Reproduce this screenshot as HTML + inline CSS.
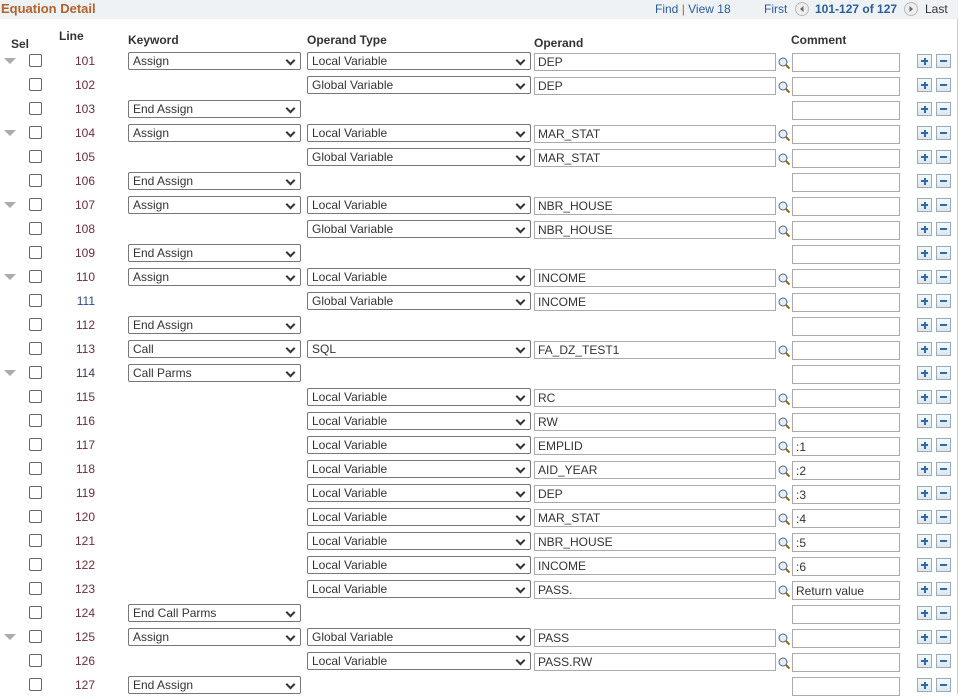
<!DOCTYPE html>
<html><head><meta charset="utf-8"><style>
*{box-sizing:border-box;margin:0;padding:0}
body{width:966px;height:694px;overflow:hidden;background:#fff;font-family:"Liberation Sans",Arial,sans-serif;font-size:12px;color:#333;position:relative}
.hdr{position:absolute;left:0;top:0;width:958px;height:19px;background:#eef2f5}
.ttl{position:absolute;left:1px;top:1px;font-size:13px;font-weight:bold;color:#b3622a}
.nav{position:absolute;top:2px;font-size:12px}
.vl{position:absolute;left:957px;top:19px;width:1px;height:675px;background:#ccc}
.th{position:absolute;font-weight:bold;color:#333;font-size:12px}
.r{position:absolute;left:0;width:958px;height:24px}
.tri{position:absolute;left:4px;top:6px;width:0;height:0;border-left:6px solid transparent;border-right:6px solid transparent;border-top:6px solid #aaa}
.cb{position:absolute;left:29px;top:2px;width:13px;height:13px;border:1px solid #666;border-radius:2px;background:#fff}
.ln{position:absolute;left:60px;width:35px;top:2px;text-align:right;color:#6b2d3c}
.sel{position:absolute;top:0;height:18px;border:1px solid #777;border-radius:2px;background:#fff;padding:1px 0 0 4px;white-space:nowrap}
.sel:after{content:"";position:absolute;right:6px;top:4px;width:5px;height:5px;border-right:2px solid #333;border-bottom:2px solid #333;transform:rotate(45deg)}
.kw{left:128px;width:173px}
.ot{left:307px;width:224px}
.op{position:absolute;left:534px;top:1px;width:242px;height:18px;border:1px solid #aaa;padding:1px 0 0 3px}
.mg{position:absolute;left:778px;top:5px;width:12px;height:12px}
.cm{position:absolute;left:792px;top:1px;width:108px;height:19px;border:1px solid #aaa;padding:2px 0 0 3px}
.pl,.mi{position:absolute;top:2px;width:15px;height:14px;border:1px solid #9ab;background:linear-gradient(#f4f8fb,#dde7ef)}
.pl{left:917px}.mi{left:936px}
.pl:before,.mi:before{content:"";position:absolute;left:3px;top:5px;width:7px;height:2px;background:#2d6aa8}
.pl:after{content:"";position:absolute;left:5.5px;top:2.5px;width:2px;height:7px;background:#2d6aa8}
</style></head><body>
<div class="hdr"><div class="ttl">Equation Detail</div>
<div class="nav" style="left:655px;color:#2a5d9a">Find <span style="color:#c55a11">|</span> View 18</div>
<div class="nav" style="left:764px;color:#2a5d9a">First</div>
<svg style="position:absolute;left:795px;top:2px" width="14" height="14"><circle cx="7" cy="7" r="6.5" fill="#eee" stroke="#bbb"/><path d="M8.5 4L5 7l3.5 3z" fill="#666"/></svg>
<div class="nav" style="left:815px;font-weight:bold;color:#2a5d9a">101-127 of 127</div>
<svg style="position:absolute;left:904px;top:2px" width="14" height="14"><circle cx="7" cy="7" r="6.5" fill="#eee" stroke="#bbb"/><path d="M5.5 4L9 7l-3.5 3z" fill="#666"/></svg>
<div class="nav" style="left:925px;color:#333">Last</div>
</div>
<div class="vl"></div>
<div class="th" style="left:11px;top:37px">Sel</div>
<div class="th" style="left:59px;top:29px">Line</div>
<div class="th" style="left:128px;top:33px">Keyword</div>
<div class="th" style="left:307px;top:33px">Operand Type</div>
<div class="th" style="left:534px;top:36px">Operand</div>
<div class="th" style="left:791px;top:33px">Comment</div>

<svg width="0" height="0" style="position:absolute"><defs><g id="m"><circle cx="5" cy="5" r="4" fill="#dfeefa" stroke="#567"/><path d="M8 8l3.5 3.5" stroke="#8a6a1a" stroke-width="2"/></g></defs></svg>

<div class="r" style="top:52px"><div class="tri"></div><div class="cb"></div><div class="ln">101</div><div class="sel kw">Assign</div><div class="sel ot">Local Variable</div><div class="op">DEP</div><svg class="mg"><use href="#m"/></svg><div class="cm"></div><div class="pl"></div><div class="mi"></div></div>
<div class="r" style="top:76px"><div class="cb"></div><div class="ln">102</div><div class="sel ot">Global Variable</div><div class="op">DEP</div><svg class="mg"><use href="#m"/></svg><div class="cm"></div><div class="pl"></div><div class="mi"></div></div>
<div class="r" style="top:100px"><div class="cb"></div><div class="ln">103</div><div class="sel kw">End Assign</div><div class="cm"></div><div class="pl"></div><div class="mi"></div></div>
<div class="r" style="top:124px"><div class="tri"></div><div class="cb"></div><div class="ln">104</div><div class="sel kw">Assign</div><div class="sel ot">Local Variable</div><div class="op">MAR_STAT</div><svg class="mg"><use href="#m"/></svg><div class="cm"></div><div class="pl"></div><div class="mi"></div></div>
<div class="r" style="top:148px"><div class="cb"></div><div class="ln">105</div><div class="sel ot">Global Variable</div><div class="op">MAR_STAT</div><svg class="mg"><use href="#m"/></svg><div class="cm"></div><div class="pl"></div><div class="mi"></div></div>
<div class="r" style="top:172px"><div class="cb"></div><div class="ln">106</div><div class="sel kw">End Assign</div><div class="cm"></div><div class="pl"></div><div class="mi"></div></div>
<div class="r" style="top:196px"><div class="tri"></div><div class="cb"></div><div class="ln">107</div><div class="sel kw">Assign</div><div class="sel ot">Local Variable</div><div class="op">NBR_HOUSE</div><svg class="mg"><use href="#m"/></svg><div class="cm"></div><div class="pl"></div><div class="mi"></div></div>
<div class="r" style="top:220px"><div class="cb"></div><div class="ln">108</div><div class="sel ot">Global Variable</div><div class="op">NBR_HOUSE</div><svg class="mg"><use href="#m"/></svg><div class="cm"></div><div class="pl"></div><div class="mi"></div></div>
<div class="r" style="top:244px"><div class="cb"></div><div class="ln">109</div><div class="sel kw">End Assign</div><div class="cm"></div><div class="pl"></div><div class="mi"></div></div>
<div class="r" style="top:268px"><div class="tri"></div><div class="cb"></div><div class="ln">110</div><div class="sel kw">Assign</div><div class="sel ot">Local Variable</div><div class="op">INCOME</div><svg class="mg"><use href="#m"/></svg><div class="cm"></div><div class="pl"></div><div class="mi"></div></div>
<div class="r" style="top:292px"><div class="cb"></div><div class="ln" style="color:#2a4a8a">111</div><div class="sel ot">Global Variable</div><div class="op">INCOME</div><svg class="mg"><use href="#m"/></svg><div class="cm"></div><div class="pl"></div><div class="mi"></div></div>
<div class="r" style="top:316px"><div class="cb"></div><div class="ln">112</div><div class="sel kw">End Assign</div><div class="cm"></div><div class="pl"></div><div class="mi"></div></div>
<div class="r" style="top:340px"><div class="cb"></div><div class="ln">113</div><div class="sel kw">Call</div><div class="sel ot">SQL</div><div class="op">FA_DZ_TEST1</div><svg class="mg"><use href="#m"/></svg><div class="cm"></div><div class="pl"></div><div class="mi"></div></div>
<div class="r" style="top:364px"><div class="tri"></div><div class="cb"></div><div class="ln" style="color:#3a3a50">114</div><div class="sel kw">Call Parms</div><div class="cm"></div><div class="pl"></div><div class="mi"></div></div>
<div class="r" style="top:388px"><div class="cb"></div><div class="ln">115</div><div class="sel ot">Local Variable</div><div class="op">RC</div><svg class="mg"><use href="#m"/></svg><div class="cm"></div><div class="pl"></div><div class="mi"></div></div>
<div class="r" style="top:412px"><div class="cb"></div><div class="ln">116</div><div class="sel ot">Local Variable</div><div class="op">RW</div><svg class="mg"><use href="#m"/></svg><div class="cm"></div><div class="pl"></div><div class="mi"></div></div>
<div class="r" style="top:436px"><div class="cb"></div><div class="ln">117</div><div class="sel ot">Local Variable</div><div class="op">EMPLID</div><svg class="mg"><use href="#m"/></svg><div class="cm">:1</div><div class="pl"></div><div class="mi"></div></div>
<div class="r" style="top:460px"><div class="cb"></div><div class="ln">118</div><div class="sel ot">Local Variable</div><div class="op">AID_YEAR</div><svg class="mg"><use href="#m"/></svg><div class="cm">:2</div><div class="pl"></div><div class="mi"></div></div>
<div class="r" style="top:484px"><div class="cb"></div><div class="ln">119</div><div class="sel ot">Local Variable</div><div class="op">DEP</div><svg class="mg"><use href="#m"/></svg><div class="cm">:3</div><div class="pl"></div><div class="mi"></div></div>
<div class="r" style="top:508px"><div class="cb"></div><div class="ln">120</div><div class="sel ot">Local Variable</div><div class="op">MAR_STAT</div><svg class="mg"><use href="#m"/></svg><div class="cm">:4</div><div class="pl"></div><div class="mi"></div></div>
<div class="r" style="top:532px"><div class="cb"></div><div class="ln">121</div><div class="sel ot">Local Variable</div><div class="op">NBR_HOUSE</div><svg class="mg"><use href="#m"/></svg><div class="cm">:5</div><div class="pl"></div><div class="mi"></div></div>
<div class="r" style="top:556px"><div class="cb"></div><div class="ln">122</div><div class="sel ot">Local Variable</div><div class="op">INCOME</div><svg class="mg"><use href="#m"/></svg><div class="cm">:6</div><div class="pl"></div><div class="mi"></div></div>
<div class="r" style="top:580px"><div class="cb"></div><div class="ln">123</div><div class="sel ot">Local Variable</div><div class="op">PASS.</div><svg class="mg"><use href="#m"/></svg><div class="cm">Return value</div><div class="pl"></div><div class="mi"></div></div>
<div class="r" style="top:604px"><div class="cb"></div><div class="ln">124</div><div class="sel kw">End Call Parms</div><div class="cm"></div><div class="pl"></div><div class="mi"></div></div>
<div class="r" style="top:628px"><div class="tri"></div><div class="cb"></div><div class="ln">125</div><div class="sel kw">Assign</div><div class="sel ot">Global Variable</div><div class="op">PASS</div><svg class="mg"><use href="#m"/></svg><div class="cm"></div><div class="pl"></div><div class="mi"></div></div>
<div class="r" style="top:652px"><div class="cb"></div><div class="ln">126</div><div class="sel ot">Local Variable</div><div class="op">PASS.RW</div><svg class="mg"><use href="#m"/></svg><div class="cm"></div><div class="pl"></div><div class="mi"></div></div>
<div class="r" style="top:676px"><div class="cb"></div><div class="ln">127</div><div class="sel kw">End Assign</div><div class="cm"></div><div class="pl"></div><div class="mi"></div></div>
</body></html>
